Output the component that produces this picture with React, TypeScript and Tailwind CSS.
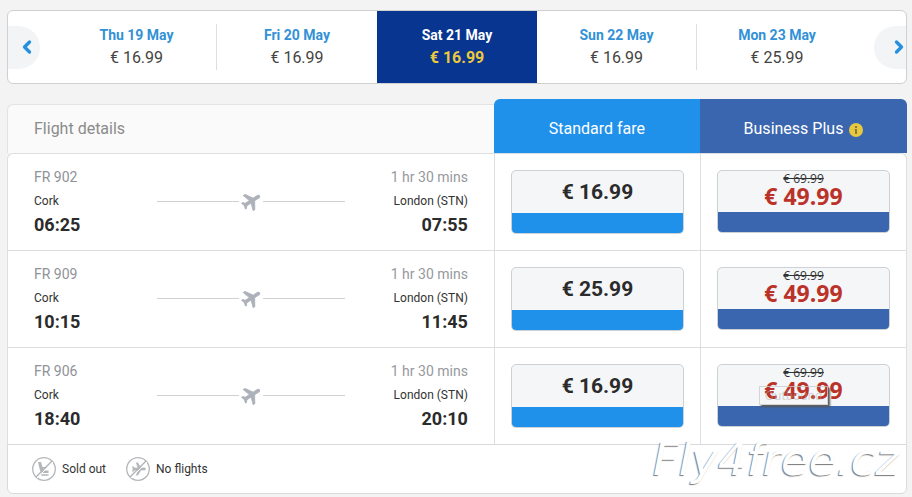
import { ChevronLeft, ChevronRight } from "lucide-react";

const days = [
  { date: "Thu 19 May", price: "€ 16.99", divider: true },
  { date: "Fri 20 May", price: "€ 16.99", divider: false },
  { date: "Sat 21 May", price: "€ 16.99", divider: false, selected: true },
  { date: "Sun 22 May", price: "€ 16.99", divider: true },
  { date: "Mon 23 May", price: "€ 25.99", divider: false },
];

const flights = [
  { code: "FR 902", departs: "06:25", arrives: "07:55", standard: "€ 16.99" },
  { code: "FR 909", departs: "10:15", arrives: "11:45", standard: "€ 25.99" },
  { code: "FR 906", departs: "18:40", arrives: "20:10", standard: "€ 16.99", tooltip: "Outbound" },
];

const planePath =
  "M21 16v-2l-8-5V3.500C13 2.670 12.330 2 11.500 2S10 2.670 10 3.500V9l-8 5v2l8-2.500V19l-2 1.500V22l3.500-1 3.500 1v-1.500L13 19v-5.500z";

function Plane() {
  return (
    <svg viewBox="0 0 20 20" className="size-5 shrink-0 fill-[#adb2ba] stroke-[#adb2ba]" aria-hidden="true">
      <g transform="translate(10.500 10) rotate(57) scale(0.94) translate(-11.500 -12)">
        <path d={planePath} strokeWidth="1" />
      </g>
    </svg>
  );
}

function SoldOutIcon() {
  return (
    <svg viewBox="0 0 24 24" className="size-6" aria-hidden="true">
      <path d="M6 5h3l1.500 5h4v1.800h-3.500l.3 1.700h5.200v2.500H9.500L8 13.500z M9 17.300h7.500v1.400H9.500z" fill="#b4b6b9" />
      <circle cx="12" cy="12" r="11.300" fill="none" stroke="#b4b6b9" strokeWidth="1.300" />
      <path d="M5 21 21 5" stroke="#fff" strokeWidth="1" />
      <path d="M4 20 20 4" stroke="#b4b6b9" strokeWidth="1.400" />
    </svg>
  );
}

function NoFlightsIcon() {
  return (
    <svg viewBox="0 0 24 24" className="size-6" aria-hidden="true">
      <g transform="translate(13 12) rotate(90) scale(0.65) translate(-11.500 -12)">
        <path d={planePath} fill="#b4b6b9" stroke="#b4b6b9" />
      </g>
      <circle cx="12" cy="12" r="11.300" fill="none" stroke="#b4b6b9" strokeWidth="1.300" />
      <path d="M5 21 21 5" stroke="#fff" strokeWidth="1" />
      <path d="M4 20 20 4" stroke="#b4b6b9" strokeWidth="1.400" />
    </svg>
  );
}

function DateBar() {
  return (
    <nav aria-label="Travel dates" className="flex h-[74px] items-center overflow-hidden rounded-md border border-[#cfd0d2] bg-white">
      <button type="button" aria-label="Previous dates" className="flex h-[43px] w-8 items-center justify-center rounded-r-full bg-[#f2f4f6] pl-[6px] text-[#2590de]">
        <ChevronLeft size={20} strokeWidth={4} />
      </button>
      <div className="mx-[17px] grid h-full flex-1 grid-cols-5">
        {days.map((day) => (
          <div key={day.date} className={day.selected ? "flex items-center bg-[#073590]" : "flex items-center"}>
            <button
              type="button"
              className={
                day.divider
                  ? "w-full border-r border-[#dcdee0] text-center"
                  : "w-full text-center"
              }
            >
              <span className={day.selected ? "block text-sm leading-[22px] font-bold text-white" : "block text-sm leading-[22px] font-bold text-[#3291d6]"}>
                {day.date}
              </span>
              <span className={day.selected ? "block text-base leading-6 font-bold text-[#ecc83c]" : "block text-base leading-6 text-[#444]"}>
                {day.price}
              </span>
            </button>
          </div>
        ))}
      </div>
      <button type="button" aria-label="Next dates" className="flex h-[43px] w-8 items-center justify-end rounded-l-full bg-[#f2f4f6] text-[#2590de]">
        <ChevronRight size={20} strokeWidth={4} className="-mr-[3px]" />
      </button>
    </nav>
  );
}

function FlightTable() {
  return (
    <table className="w-full table-fixed border-separate border-spacing-0">
      <colgroup>
        <col className="w-[54.1%]" />
        <col className="w-[22.9%]" />
        <col className="w-[23%]" />
      </colgroup>
      <thead>
        <tr className="h-[54px] text-left text-base">
          <th scope="col" className="p-0 pt-[5px] font-normal text-[#8b8b8b]">
            <div className="flex h-[49px] items-center rounded-tl-md border-t border-l border-[#e2e3e5] bg-[#fafafa] pl-[26px]">
              Flight details
            </div>
          </th>
          <th scope="col" className="rounded-tl-md bg-[#2091eb] p-0 pt-[6px] text-center font-normal text-white">
            Standard fare
          </th>
          <th scope="col" className="rounded-tr-md bg-[#3a66b0] p-0 pt-[6px] text-center font-normal text-white">
            <span className="flex items-center justify-center gap-[6px]">
              Business Plus
              <svg viewBox="0 0 14 14" className="mt-[2px] size-[14px]" aria-hidden="true">
                <circle cx="7" cy="7" r="7" fill="#e7c93f" />
                <path d="M6 3h2v2H6z M5.500 6H8v5H6V7h-.5z" fill="#8b7a3d" />
              </svg>
            </span>
          </th>
        </tr>
      </thead>
      <tbody>
        {flights.map((flight) => (
          <tr key={flight.code} className="h-[97px] first:[&>td:first-child]:rounded-tl-md first:[&>td:last-child]:rounded-tr-md">
            <td className="border-t border-l border-[#dcdfe2] bg-white px-[26px] pt-0 pb-[2px]">
              <div className="flex items-center justify-between">
                <div className="w-[123px]">
                  <div className="text-sm leading-6 text-[#8f9297]">{flight.code}</div>
                  <div className="text-xs leading-6 text-[#333]">Cork</div>
                  <div className="text-lg leading-6 font-bold text-[#2b2b2b]">{flight.departs}</div>
                </div>
                <div className="flex flex-1 items-center gap-[2px]">
                  <div className="h-px flex-1 bg-[#cfd2d5]" />
                  <Plane />
                  <div className="h-px flex-1 bg-[#cfd2d5]" />
                </div>
                <div className="w-[123px] text-right">
                  <div className="text-sm leading-6 text-[#96999d]">1 hr 30 mins</div>
                  <div className="text-xs leading-6 text-[#333]">London (STN)</div>
                  <div className="text-lg leading-6 font-bold text-[#2b2b2b]">{flight.arrives}</div>
                </div>
              </div>
            </td>
            <td className="border-t border-l border-[#dcdfe2] bg-white px-4 pt-4 pb-0 align-top">
              <button type="button" className="flex h-16 w-full flex-col overflow-hidden rounded-[5px] border border-[#ccd1d5] bg-[#f4f6f8]">
                <span className="w-full flex-1 text-center text-[21px] leading-[42px] font-bold text-[#2b2b2b]">{flight.standard}</span>
                <span className="h-5 w-full bg-[#2091eb]" />
              </button>
            </td>
            <td className="border-x border-t border-[#dcdfe2] bg-white px-4 pt-4 pb-0 align-top">
              <button type="button" className="relative flex h-[63px] w-full flex-col rounded-[5px] border border-[#ccd1d5] bg-[#f4f6f8] font-['Open_Sans',sans-serif]">
                <s className="w-full text-center text-xs leading-4 text-[#333]">€ 69.99</s>
                <span className="w-full flex-1 text-center text-[23px] leading-[18px] font-bold text-[#bb3328]">€ 49.99</span>
                <span className="h-5 w-full rounded-b-[4px] bg-[#3a66b0]" />
                {flight.tooltip && (
                  <span className="absolute top-[21px] left-[41px] h-[19px] w-[69px] border border-[#ccc]/80 text-center text-xs leading-[18px] text-[#aaa]/50 [box-shadow:2px_2px_2px_#555] [clip-path:inset(0_-4px_-4px_0)]">
                    {flight.tooltip}
                  </span>
                )}
              </button>
            </td>
          </tr>
        ))}
      </tbody>
    </table>
  );
}

export default function App() {
  return (
    <main className="min-h-screen bg-[#f3f3f3] pt-[10px] pr-[5px] pb-[3px] pl-[7px] font-[Roboto,sans-serif]">
      <DateBar />
      <section className="relative mt-[15px]">
        <FlightTable />
        <footer className="flex h-[50px] items-center gap-5 rounded-b-md border border-[#d8dadd] bg-white pl-6 text-xs text-[#333]">
          <span className="flex items-center gap-[6px]">
            <SoldOutIcon />
            Sold out
          </span>
          <span className="flex items-center gap-[6px]">
            <NoFlightsIcon />
            No flights
          </span>
        </footer>
        <div className="absolute right-2 bottom-0 font-['DejaVu_Sans',sans-serif] text-[45px] leading-[68px] text-white italic [text-shadow:-1px_1px_1px_#777]">
          Fly4free.cz
        </div>
      </section>
    </main>
  );
}
